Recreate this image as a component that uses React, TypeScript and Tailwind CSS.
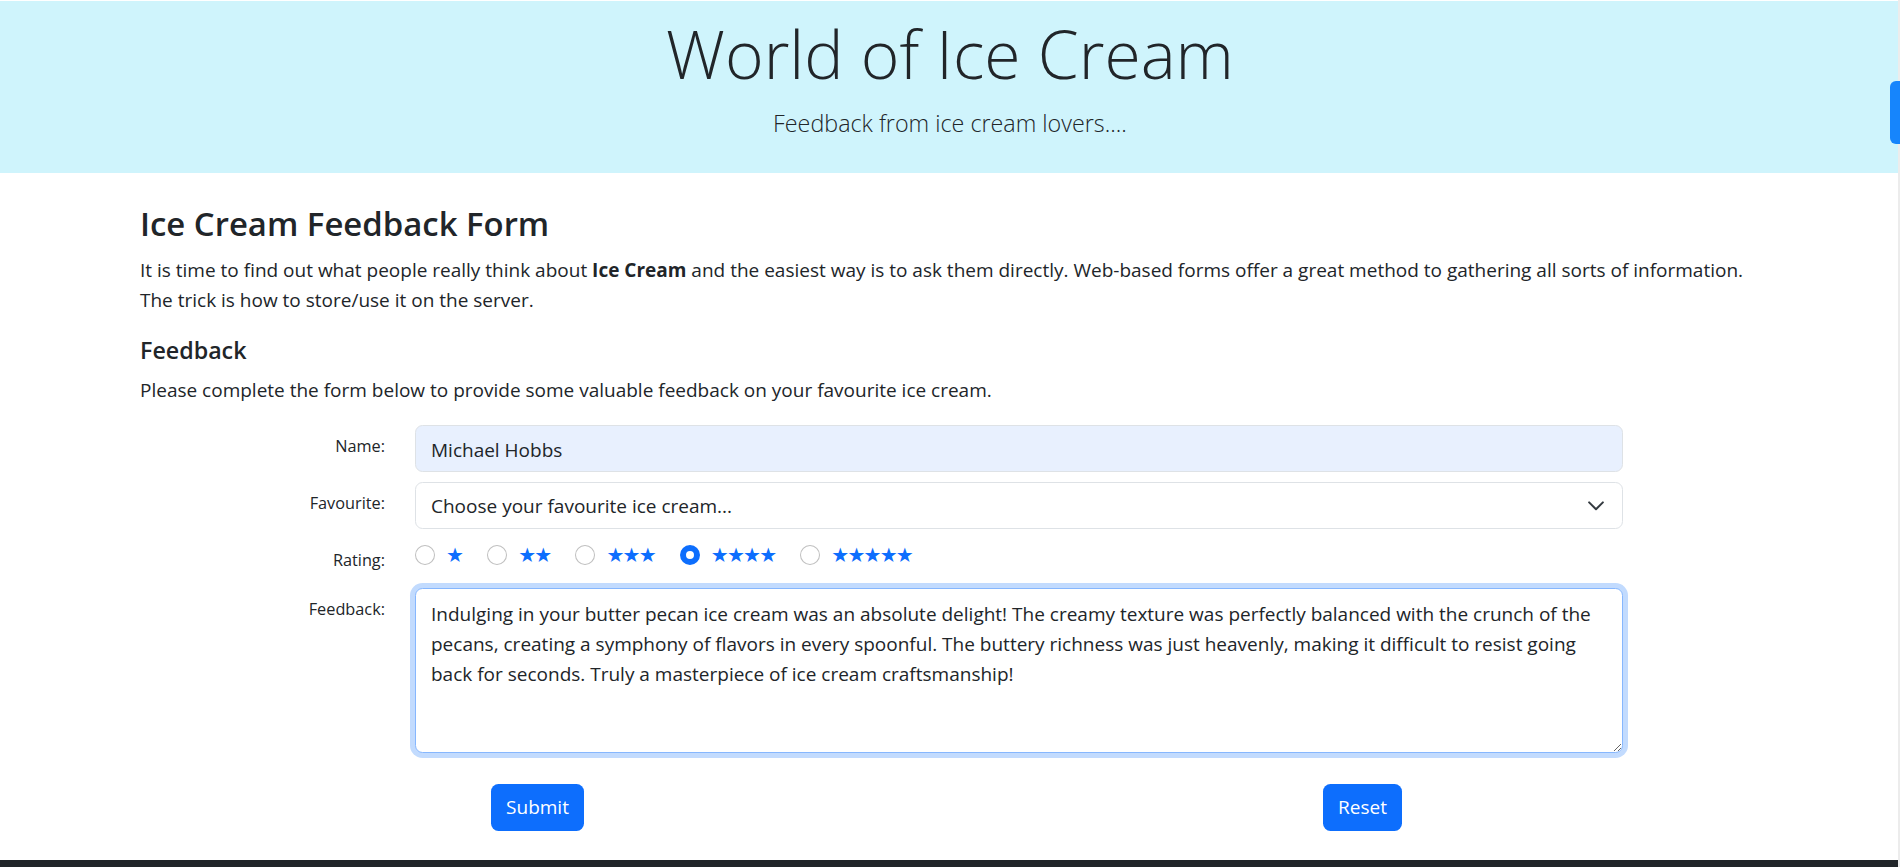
import { useState } from 'react';

const FEEDBACK_TEXT =
  'Indulging in your butter pecan ice cream was an absolute delight! The creamy texture was perfectly balanced with the crunch of the\n' +
  'pecans, creating a symphony of flavors in every spoonful. The buttery richness was just heavenly, making it difficult to resist going\n' +
  'back for seconds. Truly a masterpiece of ice cream craftsmanship!';

const RATINGS = [1, 2, 3, 4, 5];

function FormRow({ label, htmlFor, children, className = '' }: { label: string; htmlFor?: string; children: React.ReactNode; className?: string }) {
  return (
    <div className={`flex -mx-[15px] ${className}`}>
      <label htmlFor={htmlFor} className="w-[275px] shrink-0 px-[15px] pt-[8px] text-right text-[16.3px] leading-[26px]">
        {label}
      </label>
      <div className="w-[1237.5px] shrink-0 px-[15px]">{children}</div>
    </div>
  );
}

export default function App() {
  const [name, setName] = useState('Michael Hobbs');
  const [favourite, setFavourite] = useState('');
  const [rating, setRating] = useState(4);
  const [feedback, setFeedback] = useState(FEEDBACK_TEXT);

  return (
    <div className="relative h-[867px] overflow-hidden bg-white font-['Open_Sans',sans-serif] text-[#212529]">
      {/* Header */}
      <header className="mt-[1px] h-[172px] bg-[#cff4fc] pt-[10px] text-center">
        <h1 className="mb-[10px] text-[66px] font-light leading-[84px]">World of Ice Cream</h1>
        <p className="text-[23.3px] font-light leading-[37.5px]">Feedback from ice cream lovers....</p>
      </header>

      {/* Main */}
      <main className="mx-auto w-[1650px] px-[15px] pt-[30px]">
        <h3 className="mb-[10px] text-[32.9px] font-semibold leading-[42px]">Ice Cream Feedback Form</h3>
        <p className="mb-[20px] text-[19px] leading-[30px]">
          It is time to find out what people really think about <b className="font-bold">Ice Cream</b> and the easiest way
          is to ask them directly. Web-based forms offer a great method to gathering all sorts of information.
          <br />
          The trick is how to store/use it on the server.
        </p>

        <h5 className="mb-[10px] text-[23.25px] font-semibold leading-[30px]">Feedback</h5>
        <p className="mb-[20px] text-[19px] leading-[30px]">
          Please complete the form below to provide some valuable feedback on your favourite ice cream.
        </p>

        <form onSubmit={(e) => e.preventDefault()}>
          <FormRow label="Name:" htmlFor="name" className="mb-[10px]">
            <input
              id="name"
              value={name}
              onChange={(e) => setName(e.target.value)}
              className="block h-[47px] w-full rounded-[7.5px] border border-[#dee2e6] bg-[#e8f0fe] px-[15px] pt-[2px] text-[19px] outline-none"
            />
          </FormRow>

          <FormRow label="Favourite:" htmlFor="favourite" className="mb-[10px]">
            <div className="relative">
              <select
                id="favourite"
                value={favourite}
                onChange={(e) => setFavourite(e.target.value)}
                className="block h-[47px] w-full appearance-none rounded-[7.5px] border border-[#dee2e6] bg-white px-[15px] pt-[2px] text-[19px] outline-none"
              >
                <option value="">Choose your favourite ice cream...</option>
                <option value="vanilla">Vanilla</option>
                <option value="chocolate">Chocolate</option>
                <option value="butter-pecan">Butter Pecan</option>
                <option value="strawberry">Strawberry</option>
              </select>
              <svg
                className="pointer-events-none absolute right-[17px] top-[16px] h-[15px] w-[20px]"
                viewBox="0 0 16 12"
                fill="none"
                stroke="#343a40"
                strokeWidth="1.6"
                strokeLinecap="round"
                strokeLinejoin="round"
              >
                <path d="m2.5 3.5 5.5 5.5 5.5-5.5" />
              </svg>
            </div>
          </FormRow>

          <FormRow label="Rating:" className="mb-[10px] h-[39px]">
            <div className="flex h-[31px] items-center gap-[25px]">
              {RATINGS.map((r) => (
                <label key={r} className="flex cursor-pointer items-center">
                  <input
                    type="radio"
                    name="rating"
                    value={r}
                    checked={rating === r}
                    onChange={() => setRating(r)}
                    className="h-[20px] w-[20px] shrink-0 cursor-pointer appearance-none rounded-full border border-black/25 bg-white checked:border-[6px] checked:border-[#0d6efd]"
                  />
                  <span className="ml-[11px] font-['DejaVu_Sans',sans-serif] text-[20px] leading-[30px] tracking-[-1.8px] text-[#0d6efd]">
                    {'★'.repeat(r)}
                  </span>
                </label>
              ))}
            </div>
          </FormRow>

          <FormRow label="Feedback:" htmlFor="feedback">
            <textarea
              id="feedback"
              value={feedback}
              onChange={(e) => setFeedback(e.target.value)}
              className="block h-[165px] w-full rounded-[7.5px] border border-[#86b7fe] bg-white px-[15px] pb-[5.5px] pt-[9.5px] text-[19px] leading-[30px] shadow-[0_0_0_5px_rgba(13,110,253,0.25)] outline-none"
            />
          </FormRow>

          {/* Buttons */}
          <div className="-mx-[15px] mt-[31px] flex">
            <div className="w-[275px] shrink-0" />
            <div className="flex w-[275px] shrink-0 justify-center px-[15px]">
              <button type="submit" className="h-[47px] rounded-[7.5px] bg-[#0d6efd] px-[15px] text-[19px] text-white">
                Submit
              </button>
            </div>
            <div className="w-[550px] shrink-0" />
            <div className="flex w-[275px] shrink-0 justify-center px-[15px]">
              <button
                type="reset"
                onClick={() => {
                  setName('');
                  setFavourite('');
                  setRating(0);
                  setFeedback('');
                }}
                className="h-[47px] rounded-[7.5px] bg-[#0d6efd] px-[15px] text-[19px] text-white"
              >
                Reset
              </button>
            </div>
          </div>
        </form>
      </main>

      <footer className="mt-[29px] h-[60px] bg-[#212529]" />

      {/* scrollbar edge + side tab */}
      <div className="absolute right-0 top-0 h-full w-[2px] bg-[#ececec]" />
      <div className="absolute right-0 top-[81px] h-[63px] w-[10px] rounded-l-[6px] bg-[#1685fc]" />
    </div>
  );
}
